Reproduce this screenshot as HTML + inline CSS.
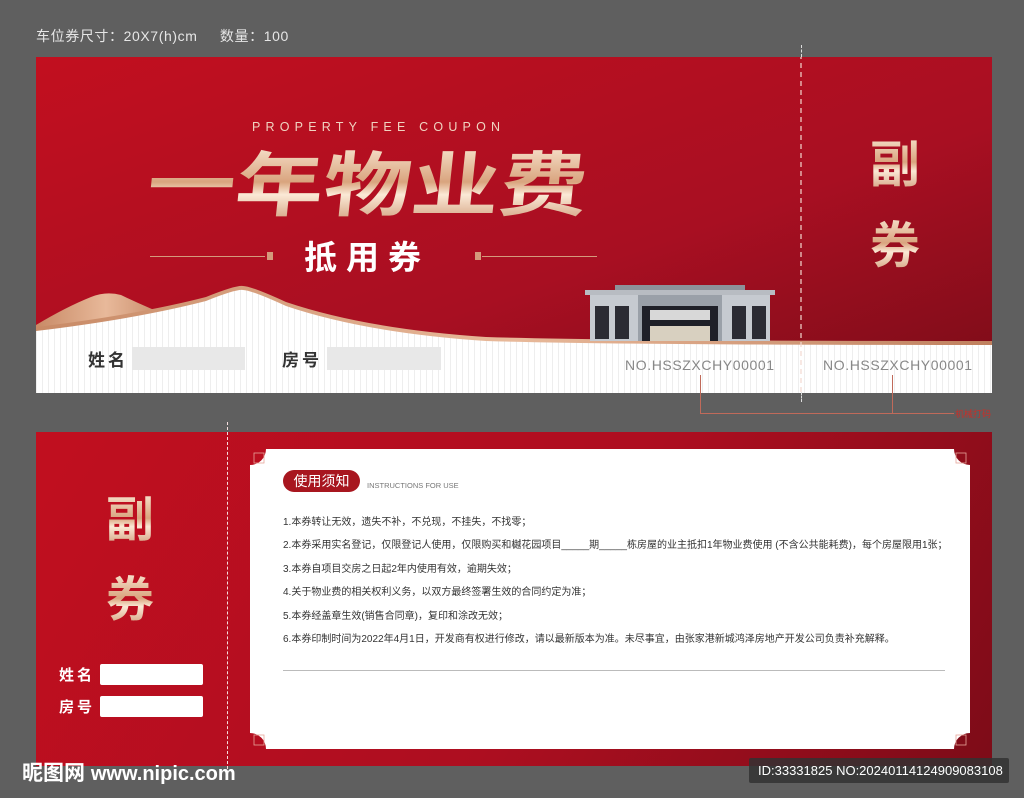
<!DOCTYPE html>
<html><head><meta charset="utf-8"><style>
*{margin:0;padding:0;box-sizing:border-box}
body{width:1024px;height:798px;background:#5f5f5f;position:relative;overflow:hidden;font-family:"Liberation Sans","Noto Sans CJK SC",sans-serif}
.a{position:absolute}
.gold{color:#ecc9a4;background:linear-gradient(180deg,#f8e4cf 0%,#d9a47e 45%,#fbe9d6 60%,#c98f6b 100%);-webkit-background-clip:text;background-clip:text;-webkit-text-fill-color:transparent}
.ins{font-size:10px;color:#333;left:283px;white-space:nowrap}
</style></head><body>
<div class="a" style="left:36px;top:26px;color:#e6e6e6;font-size:14px;letter-spacing:0.6px;white-space:pre">车位券尺寸：20X7(h)cm     数量：100</div>

<svg class="a" style="left:36px;top:57px" width="956" height="336" viewBox="0 0 956 336">
<defs>
<linearGradient id="rg" x1="0" y1="0" x2="1" y2="1"><stop offset="0" stop-color="#c20f1f"/><stop offset="0.6" stop-color="#a80f22"/><stop offset="1" stop-color="#7a0c18"/></linearGradient>
<linearGradient id="gg" x1="0" y1="0" x2="1" y2="0"><stop offset="0" stop-color="#c88a66"/><stop offset=".5" stop-color="#e8b99a"/><stop offset="1" stop-color="#c0805e"/></linearGradient>
<pattern id="st" width="6" height="10" patternUnits="userSpaceOnUse"><rect width="6" height="10" fill="#fff"/><rect width="1" height="10" fill="#eeeeee"/></pattern>
</defs>
<rect width="956" height="336" fill="url(#rg)"/>
<path d="M0 268 Q30 250 55 240 Q70 234 85 238 Q110 250 140 262 L0 275Z" fill="url(#gg)"/>
<path d="M0 270 Q100 258 170 240 Q200 228 207 229 Q215 229 250 245 Q330 272 450 280 Q580 284 956 284 L956 336 L0 336Z" fill="url(#gg)"/>
<path d="M0 274 Q100 262 170 244 Q200 232 207 233 Q215 233 250 249 Q330 276 450 284 Q580 288 956 288 L956 336 L0 336Z" fill="url(#st)"/>
<g transform="translate(544,227)">
<rect x="5" y="6" width="190" height="5" fill="#b8bcc2"/>
<rect x="35" y="1" width="130" height="5" fill="#8d929a"/>
<rect x="10" y="11" width="180" height="46" fill="#c6cad0"/>
<rect x="58" y="11" width="84" height="46" fill="#9aa0a8"/>
<rect x="15" y="22" width="14" height="33" fill="#2b2b33"/><rect x="35" y="22" width="14" height="33" fill="#2b2b33"/>
<rect x="152" y="22" width="14" height="33" fill="#2b2b33"/><rect x="172" y="22" width="14" height="33" fill="#2b2b33"/>
<rect x="62" y="22" width="76" height="35" fill="#1f2028"/>
<rect x="70" y="26" width="60" height="10" fill="#d8d8d8"/>
<rect x="70" y="42" width="60" height="15" fill="#d8d0c0"/>
</g>
<line x1="765" y1="-12" x2="765" y2="345" stroke="#f3d9d0" stroke-width="1.2" stroke-dasharray="5,4"/>
</svg>
<div class="a" style="left:801px;top:45px;height:12px;border-left:1.2px dashed #ddd"></div>
<div class="a" style="left:801px;top:392px;height:10px;border-left:1.2px dashed #ddd"></div>

<div class="a" style="left:252px;top:120px;color:#f0d3c0;font-size:12.5px;letter-spacing:5.2px">PROPERTY FEE COUPON</div>
<div class="a gold" style="left:152px;top:144px;font-size:80px;font-weight:bold;transform:skewX(-6deg) scaleX(1.1) scaleY(0.88);transform-origin:left top;white-space:nowrap;line-height:96px">一年物业费</div>
<div class="a" style="left:150px;top:256px;width:115px;height:1px;background:#d49a7c"></div>
<div class="a" style="left:482px;top:256px;width:115px;height:1px;background:#d49a7c"></div>
<div class="a" style="left:267px;top:252px;width:6px;height:8px;background:#d49a7c"></div>
<div class="a" style="left:475px;top:252px;width:6px;height:8px;background:#d49a7c"></div>
<div class="a" style="left:304px;top:238px;color:#fff;font-size:33px;font-weight:bold;letter-spacing:9px;line-height:40px">抵用券</div>

<div class="a gold" style="left:870px;top:135px;font-size:50px;font-weight:bold;line-height:60px">副</div>
<div class="a gold" style="left:870px;top:216px;font-size:50px;font-weight:bold;line-height:60px">券</div>

<div class="a" style="left:88px;top:346px;font-size:17px;font-weight:bold;color:#333;letter-spacing:3px">姓名</div>
<div class="a" style="left:132px;top:347px;width:113px;height:23px;background:#e8e8e8"></div>
<div class="a" style="left:282px;top:346px;font-size:17px;font-weight:bold;color:#333;letter-spacing:3px">房号</div>
<div class="a" style="left:327px;top:347px;width:114px;height:23px;background:#e8e8e8"></div>
<div class="a" style="left:625px;top:357px;font-size:14px;color:#888;letter-spacing:0.6px">NO.HSSZXCHY00001</div>
<div class="a" style="left:823px;top:357px;font-size:14px;color:#888;letter-spacing:0.6px">NO.HSSZXCHY00001</div>
<div class="a" style="left:700px;top:375px;width:192px;height:39px;border-left:1px solid #c06a5a;border-bottom:1px solid #c06a5a"></div>
<div class="a" style="left:892px;top:375px;width:62px;height:39px;border-left:1px solid #c06a5a;border-bottom:1px solid #c06a5a"></div>
<div class="a" style="left:955px;top:407px;font-size:9px;color:#c5302a;white-space:nowrap">机械打码</div>

<div class="a" style="left:36px;top:432px;width:956px;height:334px;background:linear-gradient(120deg,#c10f1f 0%,#ad0e20 55%,#7d0c18 100%)"></div>
<div class="a" style="left:227px;top:422px;height:352px;border-left:1.2px dashed #f5dede"></div>
<svg class="a" style="left:250px;top:449px" width="720" height="300" viewBox="0 0 720 300">
<path d="M16 0 L704 0 A16 16 0 0 0 720 16 L720 284 A16 16 0 0 0 704 300 L16 300 A16 16 0 0 0 0 284 L0 16 A16 16 0 0 0 16 0Z" fill="#fff"/>
<rect x="4" y="4" width="10" height="10" fill="none" stroke="#e6a59a" stroke-width=".8"/>
<rect x="706" y="4" width="10" height="10" fill="none" stroke="#e6a59a" stroke-width=".8"/>
<rect x="4" y="286" width="10" height="10" fill="none" stroke="#e6a59a" stroke-width=".8"/>
<rect x="706" y="286" width="10" height="10" fill="none" stroke="#e6a59a" stroke-width=".8"/>
</svg>
<div class="a gold" style="left:106px;top:493px;font-size:48px;font-weight:bold;line-height:56px">副</div>
<div class="a gold" style="left:106px;top:573px;font-size:48px;font-weight:bold;line-height:56px">券</div>
<div class="a" style="left:59px;top:664px;color:#fff;font-size:15px;font-weight:bold;letter-spacing:3px">姓名</div>
<div class="a" style="left:100px;top:664px;width:103px;height:21px;background:#fff;border-radius:2px"></div>
<div class="a" style="left:59px;top:696px;color:#fff;font-size:15px;font-weight:bold;letter-spacing:3px">房号</div>
<div class="a" style="left:100px;top:696px;width:103px;height:21px;background:#fff;border-radius:2px"></div>

<div class="a" style="left:283px;top:470px;width:77px;height:22px;background:#a8161f;border-radius:11px;color:#fff;font-size:14px;line-height:22px;text-align:center">使用须知</div>
<div class="a" style="left:367px;top:481px;font-size:7.5px;color:#777">INSTRUCTIONS FOR USE</div>
<div class="a ins" style="top:513px">1.本券转让无效，遗失不补，不兑现，不挂失，不找零；</div>
<div class="a ins" style="top:536px">2.本券采用实名登记，仅限登记人使用，仅限购买和樾花园项目_____期_____栋房屋的业主抵扣1年物业费使用 (不含公共能耗费)，每个房屋限用1张；</div>
<div class="a ins" style="top:560px">3.本券自项目交房之日起2年内使用有效，逾期失效；</div>
<div class="a ins" style="top:583px">4.关于物业费的相关权利义务，以双方最终签署生效的合同约定为准；</div>
<div class="a ins" style="top:607px">5.本券经盖章生效(销售合同章)，复印和涂改无效；</div>
<div class="a ins" style="top:630px">6.本券印制时间为2022年4月1日，开发商有权进行修改，请以最新版本为准。未尽事宜，由张家港新城鸿泽房地产开发公司负责补充解释。</div>
<div class="a" style="left:283px;top:670px;width:662px;height:1px;background:#bbb"></div>

<div class="a" style="left:22px;top:757px;color:#fff;font-size:21px;font-weight:bold;white-space:nowrap">昵图网 <span style="font-size:20px">www.nipic.com</span></div>
<div class="a" style="left:749px;top:758px;width:260px;height:25px;background:rgba(50,50,50,.85);color:#fff;font-size:13px;line-height:25px;padding-left:9px;border-radius:2px">ID:33331825 NO:20240114124909083108</div>
</body></html>
